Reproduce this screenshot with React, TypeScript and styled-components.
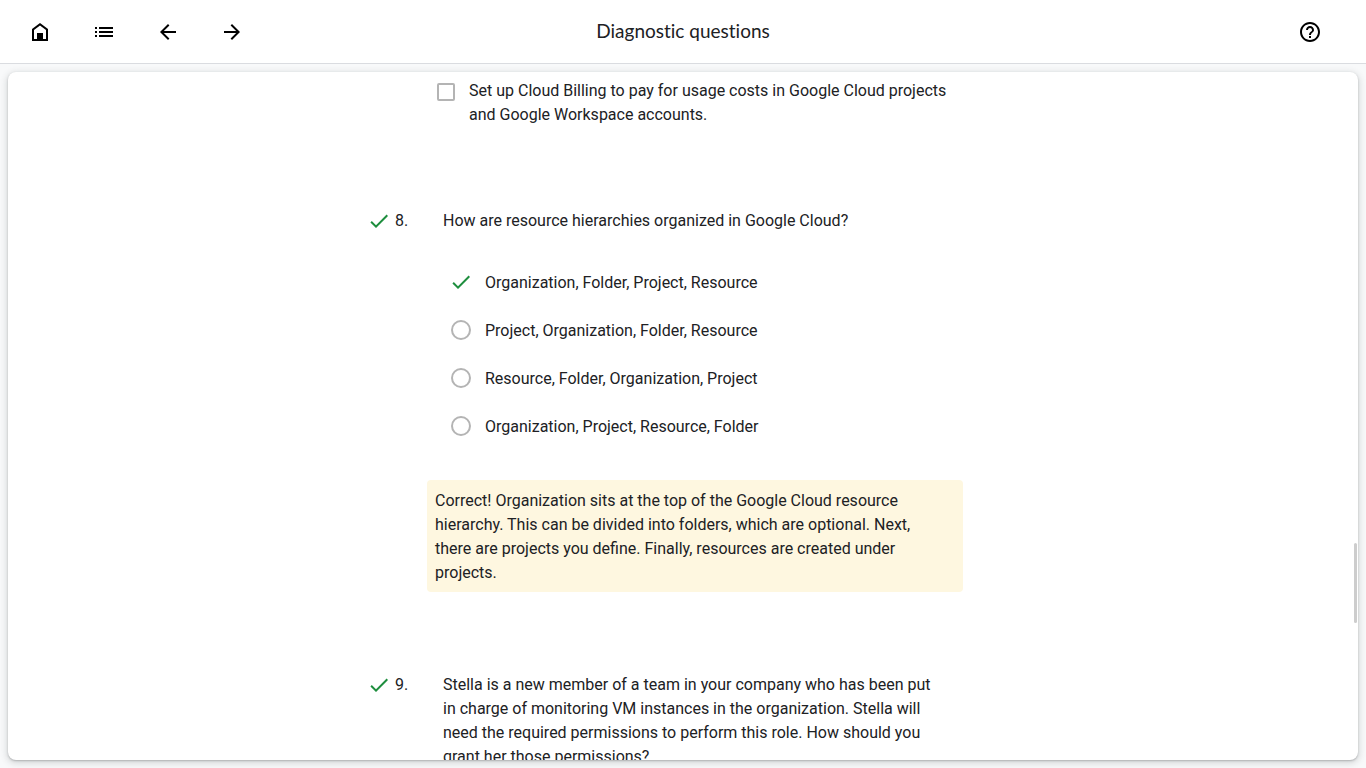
import React from 'react';
import styled, { createGlobalStyle } from 'styled-components';

const GlobalStyle = createGlobalStyle`
  *, *::before, *::after { box-sizing: border-box; }
  body {
    margin: 0;
    background: #f8f9fa;
    color: #202124;
    font: 16px/24px Roboto, "Liberation Sans", sans-serif;
  }
`;

const Page = styled.div`
  display: flex;
  flex-direction: column;
  height: 100vh;
`;

const Header = styled.header`
  display: grid;
  grid-template-columns: 1fr auto 1fr;
  align-items: center;
  flex: none;
  height: 64px;
  padding: 0 16px;
  background: #fff;
  border-bottom: 1px solid #dadce0;
`;

const Nav = styled.nav`
  display: flex;
  gap: 16px;
`;

const IconButton = styled.button`
  display: flex;
  align-items: center;
  justify-content: center;
  width: 48px;
  height: 48px;
  padding: 0;
  border: 0;
  border-radius: 50%;
  background: transparent;
  color: #000;
  cursor: pointer;
`;

const Title = styled.h1`
  margin: 0;
  padding-bottom: 2px;
  font-family: Lato, Roboto, sans-serif;
  font-size: 19px;
  font-weight: 400;
  font-variant-ligatures: none;
  line-height: 24px;
`;

const End = styled.div`
  display: flex;
  justify-content: flex-end;
  padding-right: 16px;
`;

const Card = styled.main`
  position: relative;
  flex: 1;
  min-height: 0;
  margin: 8px;
  background: #fff;
  border-radius: 8px;
  box-shadow: 0 1px 2px rgba(60, 64, 67, 0.3), 0 2px 6px 2px rgba(60, 64, 67, 0.15);
  overflow: hidden;
`;

const Scroller = styled.div`
  height: 100%;
  padding-top: 7px;
  overflow-y: auto;
  scrollbar-width: none;
`;

const ScrollThumb = styled.div`
  position: absolute;
  right: 1px;
  bottom: 137px;
  width: 3px;
  height: 80px;
  border-radius: 2px;
  background: #cdcdcd;
`;

const Column = styled.div`
  display: flex;
  flex-direction: column;
  gap: 81px;
  width: 100%;
  max-width: 632px;
  margin: 0 auto;
`;

const CheckOption = styled.label`
  display: flex;
  align-items: flex-start;
  gap: 14px;
  padding: 0 42px 1px 70px;
`;

const Checkbox = styled.input`
  appearance: none;
  flex: none;
  width: 18px;
  height: 18px;
  margin: 4px 0 0;
  border: 2px solid #b4b4b4;
  border-radius: 2px;
`;

const QuestionHead = styled.div`
  display: grid;
  grid-template-columns: 28px 48px 1fr;
  padding-right: 52px;
`;

const Prompt = styled.h2`
  margin: 0;
  font: inherit;
`;

const Options = styled.fieldset`
  margin: 25px 0 30px;
  padding: 0 0 0 82px;
  border: 0;
`;

const Option = styled.label`
  display: flex;
  align-items: center;
  gap: 12px;
  height: 48px;
`;

const OptionText = styled.span`
  padding-top: 2px;
`;

const Mark = styled.span`
  display: flex;
  align-items: center;
  justify-content: center;
  width: 24px;
  height: 24px;
`;

const Radio = styled.input`
  appearance: none;
  width: 20px;
  height: 20px;
  margin: 0;
  border: 2px solid #b4b4b4;
  border-radius: 50%;

  &:checked {
    width: 0;
    height: 0;
    border: 0;
  }
`;

const Feedback = styled.p`
  margin: 0 36px 0 60px;
  padding: 9px 16px 7px 8px;
  border-radius: 4px;
  background: #fef7e0;
`;

const paths = {
  home: 'M4 21V9l8-6 8 6v12H4zm2-2h3v-6h6v6h3v-9l-6-4.5L6 10v9zM9 13h6v7H9z',
  list: 'M3 7h2v2H3zM3 11h2v2H3zM3 15h2v2H3zM7 7h14v2H7zM7 11h14v2H7zM7 15h14v2H7z',
  back: 'M20 11H7.83l5.59-5.59L12 4l-8 8 8 8 1.41-1.41L7.83 13H20v-2z',
  forward: 'M12 4l-1.41 1.41L16.17 11H4v2h12.17l-5.58 5.59L12 20l8-8-8-8z',
  help: 'M11 18h2v-2h-2v2zm1-16C6.48 2 2 6.48 2 12s4.48 10 10 10 10-4.48 10-10S17.52 2 12 2zm0 18c-4.41 0-8-3.59-8-8s3.59-8 8-8 8 3.59 8 8-3.59 8-8 8zm0-14c-2.21 0-4 1.79-4 4h2c0-1.1.9-2 2-2s2 .9 2 2c0 2-3 1.75-3 5h2c0-2.25 3-2.5 3-5 0-2.21-1.79-4-4-4z',
  check: 'M9 16.17L4.83 12l-1.42 1.41L9 19 21 7l-1.41-1.41z',
};

function Icon({ name, color = 'currentColor' }: { name: keyof typeof paths; color?: string }) {
  return (
    <svg width="24" height="24" viewBox="0 0 24 24" fill={color} aria-hidden="true">
      <path d={paths[name]} />
    </svg>
  );
}

const GREEN = '#1e8e3e';

interface QuestionProps {
  number: number;
  prompt: string;
  options?: string[];
  selected?: number;
  feedback?: string;
}

function Question({ number, prompt, options, selected, feedback }: QuestionProps) {
  return (
    <section>
      <QuestionHead>
        <Icon name="check" color={GREEN} />
        <span>{number}.</span>
        <Prompt>{prompt}</Prompt>
      </QuestionHead>
      {options && (
        <Options aria-label={prompt}>
          {options.map((text, i) => (
            <Option key={text}>
              <Mark>
                <Radio type="radio" name={`question-${number}`} defaultChecked={i === selected} />
                {i === selected && <Icon name="check" color={GREEN} />}
              </Mark>
              <OptionText>{text}</OptionText>
            </Option>
          ))}
        </Options>
      )}
      {feedback && <Feedback>{feedback}</Feedback>}
    </section>
  );
}

export default function App() {
  return (
    <>
      <GlobalStyle />
      <Page>
        <Header>
          <Nav>
            <IconButton aria-label="Home"><Icon name="home" /></IconButton>
            <IconButton aria-label="Contents"><Icon name="list" /></IconButton>
            <IconButton aria-label="Previous"><Icon name="back" /></IconButton>
            <IconButton aria-label="Next"><Icon name="forward" /></IconButton>
          </Nav>
          <Title>Diagnostic questions</Title>
          <End>
            <IconButton aria-label="Help"><Icon name="help" /></IconButton>
          </End>
        </Header>
        <Card>
          <Scroller>
            <Column>
              <CheckOption>
                <Checkbox type="checkbox" />
                <span>
                  Set up Cloud Billing to pay for usage costs in Google Cloud projects and Google
                  Workspace accounts.
                </span>
              </CheckOption>
              <Question
                number={8}
                prompt="How are resource hierarchies organized in Google Cloud?"
                options={[
                  'Organization, Folder, Project, Resource',
                  'Project, Organization, Folder, Resource',
                  'Resource, Folder, Organization, Project',
                  'Organization, Project, Resource, Folder',
                ]}
                selected={0}
                feedback="Correct! Organization sits at the top of the Google Cloud resource hierarchy. This can be divided into folders, which are optional. Next, there are projects you define. Finally, resources are created under projects."
              />
              <Question
                number={9}
                prompt="Stella is a new member of a team in your company who has been put in charge of monitoring VM instances in the organization. Stella will need the required permissions to perform this role. How should you grant her those permissions?"
              />
            </Column>
          </Scroller>
          <ScrollThumb />
        </Card>
      </Page>
    </>
  );
}
